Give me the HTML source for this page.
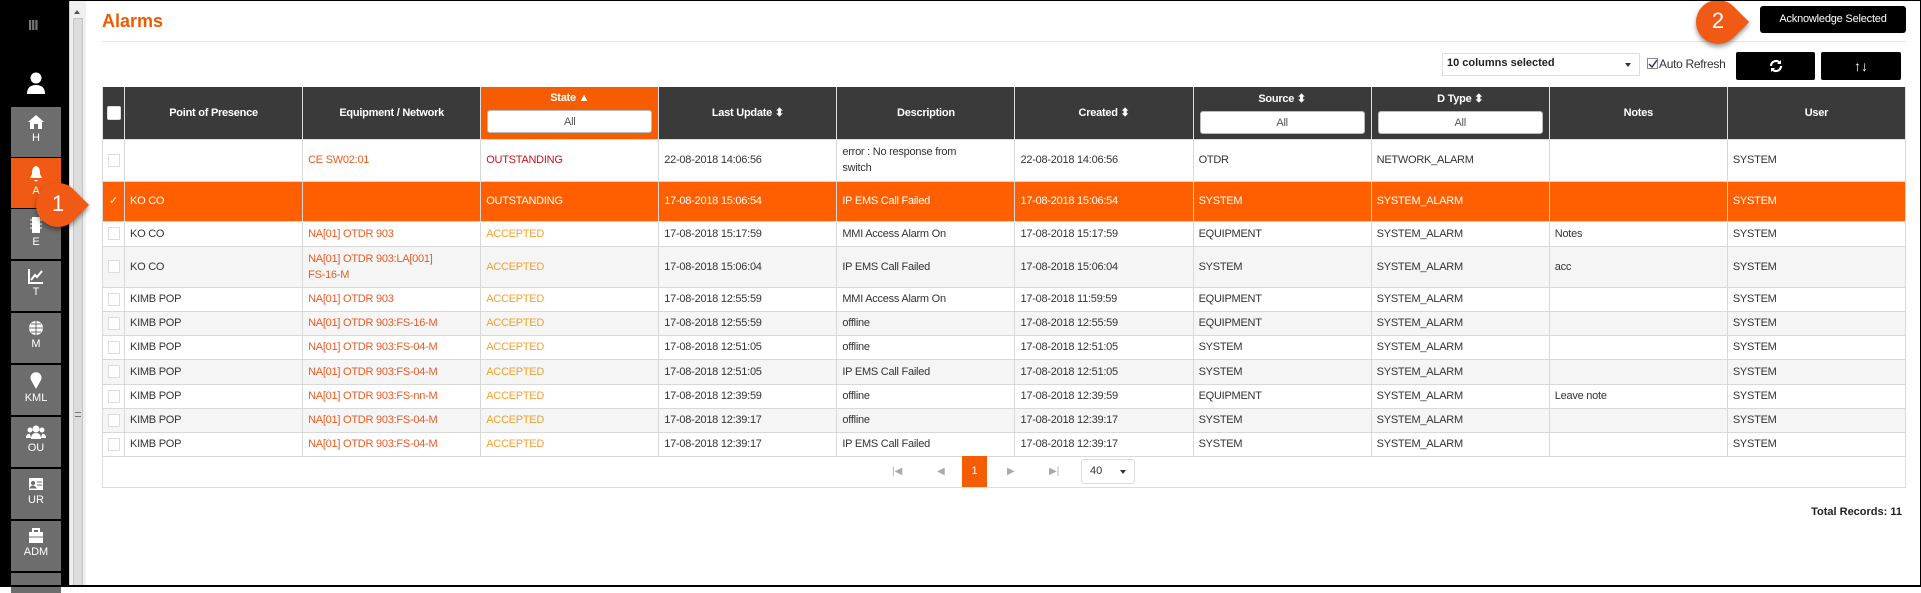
<!DOCTYPE html>
<html><head><meta charset="utf-8"><style>
*{box-sizing:border-box;margin:0;padding:0}
body{width:1921px;height:587px;overflow:hidden;background:#fff;font-family:"Liberation Sans",Arial,sans-serif;font-size:11px;color:#333;position:relative}
.frame{position:absolute;left:0;top:0;width:1921px;height:587px;border:1px solid #000;border-bottom:2px solid #000;pointer-events:none;z-index:10}
.side{position:absolute;left:0;top:0;width:69px;height:587px;background:#000}
.sb{position:absolute;left:11px;width:50px;height:50px;background:#6d6d6d;color:#fff;text-align:center;font-size:11px}
.sb svg{display:block;margin:7px auto 2px}
.scroll{position:absolute;left:69px;top:0;width:17px;height:587px;background:#f0f0f0;border-left:1px solid #ccc}
.scroll .tr{position:absolute;left:3px;top:18px;width:10px;height:568px;background:#dcdcdc;border:1px solid #c4c4c4}
h1{position:absolute;left:102px;top:11px;font-size:18px;color:#f05a00;font-weight:bold}
.hr{position:absolute;left:102px;top:41px;width:1804px;height:1px;background:#e6e6e6}
.ack{position:absolute;left:1760px;top:6px;width:146px;height:27px;background:#000;color:#fff;border-radius:3px;text-align:center;line-height:27px;font-size:11px;letter-spacing:-0.2px}
.sel{position:absolute;left:1442px;top:53px;width:198px;height:23px;border:1px solid #ddd;font-weight:bold;padding:3px 0 0 4px;font-size:11px;color:#222}
.sel:after{content:"";position:absolute;right:8px;top:9px;border:3px solid transparent;border-top:4px solid #333}
.ar{position:absolute;left:1647px;top:57px;font-size:12px;color:#333;letter-spacing:-0.3px}
.ar i{display:inline-block;width:11px;height:11px;border:1px solid #888;vertical-align:-1px;position:relative;margin-right:1px}
.bb{position:absolute;top:52px;height:28px;background:#000;border-radius:2px;color:#fff;text-align:center;font-weight:bold;font-size:14px;line-height:28px}
table{position:absolute;left:102px;top:87px;border-collapse:collapse;table-layout:fixed;width:1804px;letter-spacing:-0.25px}
th{background:#3a3a3a;color:#fff;font-weight:bold;border:1px solid #ddd;border-top:none;height:52px;vertical-align:middle;text-align:center;font-size:11px}
th.on{background:#f55d00}
th .f{display:block;margin:6px 6px 0;height:23px;background:#fff;color:#555;font-weight:normal;border-radius:3px;line-height:23px;border:1px solid #bbb}
td{border:1px solid #d8d8d8;padding:0 5px;vertical-align:middle;line-height:16px}
tr.g td{background:#f5f5f5}
tr.o td{background:#ff5f00;color:#fff!important}
.cb{display:block;width:12px;height:13px;border:1px solid #ddd;background:#fff;margin:auto}
.eq{color:#ea5a22}.ac{color:#f5a02a}.ou{color:#d0101a}
.pg{position:absolute;left:102px;top:456px;width:1804px;height:32px;border:1px solid #ddd;border-top:none}
.pi{position:absolute;top:10px;color:#aaa;font-size:10px}
.tot{position:absolute;right:19px;top:506px;font-weight:bold;font-size:11px;color:#222}
.call{position:absolute;width:44px;height:44px;background:#f05a14;border-radius:50% 0 50% 50%;transform:rotate(45deg);box-shadow:2px 2px 5px rgba(0,0,0,.4)}
.cn{position:absolute;color:#fff;font-size:22px;width:44px;text-align:center}
</style></head><body>
<div class="side">
 <div style="position:absolute;left:28px;top:17px;color:#777;font-size:15px;font-weight:bold;letter-spacing:-1px">III</div>
 <svg style="position:absolute;left:26px;top:72px" width="20" height="22" viewBox="0 0 20 22"><circle cx="10" cy="6" r="5.5" fill="#fff"/><path d="M1 22 Q1 13 10 13 Q19 13 19 22Z" fill="#fff"/></svg>
 <div class="sb" style="top:107px"><svg width="18" height="16" viewBox="0 0 18 16"><path d="M9 1 L1 8 L3 8 L3 15 L7 15 L7 10 L11 10 L11 15 L15 15 L15 8 L17 8Z" fill="#fff"/></svg>H</div>
 <div class="sb" style="top:158px;background:#f05a14"><svg width="16" height="18" viewBox="0 0 16 18"><path d="M8 1 C4 2 4 6 4 9 L2 13 L14 13 L12 9 C12 6 12 2 8 1Z M6 15 L10 15 Q8 18 6 15Z" fill="#fff"/></svg>A</div>
 <div class="sb" style="top:209px"><svg width="12" height="18" viewBox="0 0 12 18"><rect x="2" y="1" width="8" height="16" fill="#fff"/><path d="M0 4h2M0 8h2M0 12h2M10 4h2M10 8h2M10 12h2" stroke="#fff"/></svg>E</div>
 <div class="sb" style="top:261px"><svg width="16" height="16" viewBox="0 0 16 16"><path d="M1 1V15H15" stroke="#fff" stroke-width="2" fill="none"/><path d="M3 12L7 7L9 9L14 3" stroke="#fff" stroke-width="2" fill="none"/></svg>T</div>
 <div class="sb" style="top:313px"><svg width="16" height="16" viewBox="0 0 16 16"><circle cx="8" cy="8" r="7" fill="#fff"/><path d="M1 8H15M8 1V15M3 4H13M3 12H13" stroke="#6d6d6d"/></svg>M</div>
 <div class="sb" style="top:365px"><svg width="12" height="18" viewBox="0 0 12 18"><path d="M6 17 L1 8 A5.5 5.5 0 1 1 11 8Z" fill="#fff"/></svg>KML</div>
 <div class="sb" style="top:417px"><svg width="20" height="16" viewBox="0 0 20 16"><circle cx="10" cy="5" r="3.5" fill="#fff"/><circle cx="4" cy="6" r="2.5" fill="#fff"/><circle cx="16" cy="6" r="2.5" fill="#fff"/><path d="M5 15Q5 9 10 9Q15 9 15 15Z M0 14Q0 9 4 10L5 14Z M20 14Q20 9 16 10L15 14Z" fill="#fff"/></svg>OU</div>
 <div class="sb" style="top:469px"><svg width="16" height="16" viewBox="0 0 16 16"><rect x="1" y="2" width="14" height="12" fill="#fff"/><circle cx="5" cy="7" r="2" fill="#6d6d6d"/><path d="M2 12Q5 8 8 12Z M9 6H14M9 9H14" stroke="#6d6d6d" fill="#6d6d6d"/></svg>UR</div>
 <div class="sb" style="top:521px"><svg width="16" height="16" viewBox="0 0 16 16"><rect x="1" y="4" width="14" height="11" fill="#fff"/><rect x="5" y="1" width="6" height="4" stroke="#fff" stroke-width="2" fill="none"/><path d="M1 9H15" stroke="#6d6d6d"/></svg>ADM</div>
 <div class="sb" style="top:573px;height:20px"></div>
</div>
<div class="scroll"><div style="position:absolute;left:4px;top:7px;border:3px solid transparent;border-bottom:4px solid #555"></div><div class="tr"></div><div style="position:absolute;left:5px;top:412px;width:6px;height:5px;border-top:1px solid #777;border-bottom:1px solid #777"></div></div>

<h1>Alarms</h1>
<div class="hr"></div>
<div class="ack">Acknowledge Selected</div>
<div class="call" style="left:1696px;top:0px"></div><div class="cn" style="left:1696px;top:8px">2</div>
<div class="sel">10 columns selected</div>
<div class="ar"><i><svg style="position:absolute;left:0;top:0" width="10" height="10"><path d="M1 5L4 8L9 1" stroke="#336" stroke-width="1.5" fill="none"/></svg></i>Auto Refresh</div>
<div class="bb" style="left:1736px;width:79px"><svg width="14" height="14" viewBox="0 0 14 14" style="vertical-align:-2px"><path d="M2 7A5 5 0 0 1 11 4M12 7A5 5 0 0 1 3 10" stroke="#fff" stroke-width="2.2" fill="none"/><path d="M12 1V5H8Z M2 13V9H6Z" fill="#fff"/></svg></div>
<div class="bb" style="left:1821px;width:80px">↑↓</div>

<table>
<colgroup><col style="width:22px"><col style="width:178px"><col style="width:178px"><col style="width:178px"><col style="width:178px"><col style="width:178px"><col style="width:178px"><col style="width:178px"><col style="width:178px"><col style="width:178px"><col style="width:178px"></colgroup>
<tr><th><span class="cb" style="width:14px;height:14px;border-radius:2px"></span></th><th>Point of Presence</th><th>Equipment / Network</th><th class="on">State ▲<span class="f">All</span></th><th>Last Update ⬍</th><th>Description</th><th>Created ⬍</th><th>Source ⬍<span class="f">All</span></th><th>D Type ⬍<span class="f">All</span></th><th>Notes</th><th>User</th></tr>
<tr style="height:42px"><td><span class="cb"></span></td><td></td><td class="eq">CE SW02:01</td><td class="ou">OUTSTANDING</td><td>22-08-2018 14:06:56</td><td>error : No response from<br>switch</td><td>22-08-2018 14:06:56</td><td>OTDR</td><td>NETWORK_ALARM</td><td></td><td>SYSTEM</td></tr>
<tr class="o" style="height:40px"><td style="color:#fff;text-align:center">✓</td><td>KO CO</td><td></td><td>OUTSTANDING</td><td>17-08-2018 15:06:54</td><td>IP EMS Call Failed</td><td>17-08-2018 15:06:54</td><td>SYSTEM</td><td>SYSTEM_ALARM</td><td></td><td>SYSTEM</td></tr>
<tr style="height:25px"><td><span class="cb"></span></td><td>KO CO</td><td class="eq">NA[01] OTDR 903</td><td class="ac">ACCEPTED</td><td>17-08-2018 15:17:59</td><td>MMI Access Alarm On</td><td>17-08-2018 15:17:59</td><td>EQUIPMENT</td><td>SYSTEM_ALARM</td><td>Notes</td><td>SYSTEM</td></tr>
<tr class="g" style="height:41px"><td><span class="cb"></span></td><td>KO CO</td><td class="eq">NA[01] OTDR 903:LA[001]<br>FS-16-M</td><td class="ac">ACCEPTED</td><td>17-08-2018 15:06:04</td><td>IP EMS Call Failed</td><td>17-08-2018 15:06:04</td><td>SYSTEM</td><td>SYSTEM_ALARM</td><td>acc</td><td>SYSTEM</td></tr>
<tr style="height:24px"><td><span class="cb"></span></td><td>KIMB POP</td><td class="eq">NA[01] OTDR 903</td><td class="ac">ACCEPTED</td><td>17-08-2018 12:55:59</td><td>MMI Access Alarm On</td><td>17-08-2018 11:59:59</td><td>EQUIPMENT</td><td>SYSTEM_ALARM</td><td></td><td>SYSTEM</td></tr>
<tr class="g" style="height:24px"><td><span class="cb"></span></td><td>KIMB POP</td><td class="eq">NA[01] OTDR 903:FS-16-M</td><td class="ac">ACCEPTED</td><td>17-08-2018 12:55:59</td><td>offline</td><td>17-08-2018 12:55:59</td><td>EQUIPMENT</td><td>SYSTEM_ALARM</td><td></td><td>SYSTEM</td></tr>
<tr style="height:24px"><td><span class="cb"></span></td><td>KIMB POP</td><td class="eq">NA[01] OTDR 903:FS-04-M</td><td class="ac">ACCEPTED</td><td>17-08-2018 12:51:05</td><td>offline</td><td>17-08-2018 12:51:05</td><td>SYSTEM</td><td>SYSTEM_ALARM</td><td></td><td>SYSTEM</td></tr>
<tr class="g" style="height:25px"><td><span class="cb"></span></td><td>KIMB POP</td><td class="eq">NA[01] OTDR 903:FS-04-M</td><td class="ac">ACCEPTED</td><td>17-08-2018 12:51:05</td><td>IP EMS Call Failed</td><td>17-08-2018 12:51:05</td><td>SYSTEM</td><td>SYSTEM_ALARM</td><td></td><td>SYSTEM</td></tr>
<tr style="height:24px"><td><span class="cb"></span></td><td>KIMB POP</td><td class="eq">NA[01] OTDR 903:FS-nn-M</td><td class="ac">ACCEPTED</td><td>17-08-2018 12:39:59</td><td>offline</td><td>17-08-2018 12:39:59</td><td>EQUIPMENT</td><td>SYSTEM_ALARM</td><td>Leave note</td><td>SYSTEM</td></tr>
<tr class="g" style="height:24px"><td><span class="cb"></span></td><td>KIMB POP</td><td class="eq">NA[01] OTDR 903:FS-04-M</td><td class="ac">ACCEPTED</td><td>17-08-2018 12:39:17</td><td>offline</td><td>17-08-2018 12:39:17</td><td>SYSTEM</td><td>SYSTEM_ALARM</td><td></td><td>SYSTEM</td></tr>
<tr style="height:24px"><td><span class="cb"></span></td><td>KIMB POP</td><td class="eq">NA[01] OTDR 903:FS-04-M</td><td class="ac">ACCEPTED</td><td>17-08-2018 12:39:17</td><td>IP EMS Call Failed</td><td>17-08-2018 12:39:17</td><td>SYSTEM</td><td>SYSTEM_ALARM</td><td></td><td>SYSTEM</td></tr>
</table>
<div class="pg">
 <span class="pi" style="left:789px">|◀</span><span class="pi" style="left:834px">◀</span>
 <div style="position:absolute;left:859px;top:0;width:25px;height:31px;background:#f55d00;color:#fff;text-align:center;line-height:31px">1</div>
 <span class="pi" style="left:904px">▶</span><span class="pi" style="left:946px">▶|</span>
 <div style="position:absolute;left:978px;top:3px;width:54px;height:25px;border:1px solid #ddd;border-radius:3px;padding:5px 0 0 8px">40<span style="position:absolute;right:8px;top:10px;border:3px solid transparent;border-top:4px solid #333"></span></div>
</div>
<div class="tot">Total Records: 11</div>
<div class="call" style="left:36px;top:183px"></div><div class="cn" style="left:36px;top:191px">1</div>
<div class="frame"></div>
</body></html>
